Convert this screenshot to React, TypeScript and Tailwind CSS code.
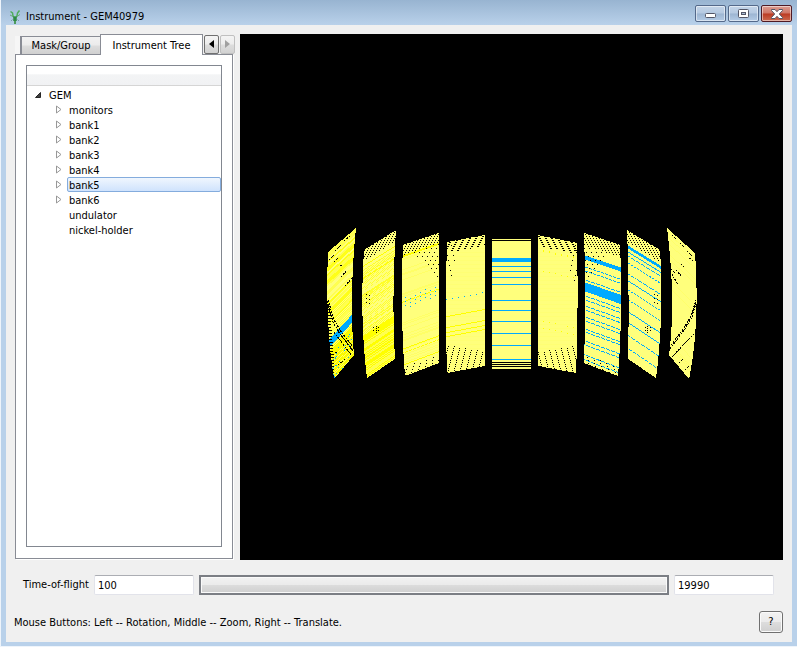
import React from "react";

type Point = [number, number];
type Stripe = { from: number; to: number; color: string; gap?: number };
type Bank = {
  top: [Point, Point];
  bottom: [Point, Point];
  bulge: [number, number];
  stripes: Stripe[];
  noise?: (v: number, x: number, y: number) => string | null;
  holes?: (v: number, rest: number, u: number, x: number, y: number) => boolean;
};

const PALE = "#ffff7c";
const BRIGHT = "#ffff00";
const BLUE = "#00aaff";
const BLACK = "#000000";

const hash = (n: number) => {
  const s = Math.sin(n * 127.1 + 11.7) * 43758.5453;
  return s - Math.floor(s);
};

const mod = (n: number, m: number) => ((n % m) + m) % m;

const line = (at: number, color = BLUE, gap = 0): Stripe => ({ from: at, to: at + 1, color, gap });

const banks: Bank[] = [
  {
    top: [[328, 252], [356, 228]],
    bottom: [[334, 379], [354, 355]],
    bulge: [-3, -3],
    stripes: [{ from: 84, to: 92, color: BLUE }],
    noise: (v, x, y) => {
      const h = hash(Math.floor(v / 2));
      if (v > 100 && hash(x * 3 + y * 57) > 0.95) return BLUE;
      if (v > 94) return mod(x + y, 2) === 0 || h > 0.5 ? "#fafa00" : "#ffff60";
      if (h > 0.75) return "#ffff18";
      if (h > 0.45) return "#ffff50";
      return v > 50 && mod(x + y, 2) === 0 ? "#ffff30" : null;
    },
    holes: (_v, _r, u, x, y) => u < 0.1 && y > 305 && mod(y, 3) === 0 && x < 334,
  },
  {
    top: [[364, 250], [396, 230]],
    bottom: [[367, 378], [395, 359]],
    bulge: [-3, -2],
    stripes: [line(15, BRIGHT), line(27, BRIGHT)],
    noise: (v, x, y) => {
      const h = hash(Math.floor(v) + 5);
      if (v < 14) return null;
      if (v > 84) return h > 0.45 ? "#ffff00" : "#ffff50";
      if (h > 0.8) return "#ffff28";
      return v > 20 && h > 0.3 && mod(x + y, 2) === 0 ? "#ffff30" : null;
    },
    holes: (v, _r, _u, x, y) =>
      (v < 11 && mod(y, 2) === 0 && mod(x + (y >> 1), 3) === 0) ||
      (x >= 364 && x < 370 && y > 293 && y < 304 && mod(x, 3) === 0 && mod(y + x, 4) === 0) ||
      (y > 324 && y < 333 && ((x === 376 && mod(y, 2) === 0) || (mod(y, 3) === 0 && (x === 373 || x === 378)))),
  },
  {
    top: [[403, 245], [439, 233]],
    bottom: [[405, 376], [439, 363]],
    bulge: [-2, 0],
    stripes: [
      { from: 10, to: 12, color: BRIGHT },
      line(56, BRIGHT, 5),
      line(103, BRIGHT),
      line(107, BRIGHT, 4),
      line(119, BRIGHT),
    ],
    noise: (v, x, y) => {
      if (v > 52 && v < 64 && mod(x, 5) === 0 && mod(y + x * 7, 4) === 0) return BLUE;
      return hash(Math.floor(v)) > 0.75 ? "#ffff66" : null;
    },
    holes: (v, rest, u, x, y) =>
      (v < 10 && mod(y, 2) === 0 && mod(x * 2 + y, 6) === 0) ||
      (v >= 10 && v < 50 * u - 3 && mod(y, 4) === 0 && mod(x + (y >> 1), 5) === 0) ||
      (rest < 9 && mod(y, 3) === 0 && mod(x + (y >> 2), 6) === 0),
  },
  {
    top: [[447, 242], [485, 235]],
    bottom: [[447, 373], [485, 366]],
    bulge: [-1, 0],
    stripes: [line(74, BRIGHT), line(85, BRIGHT), line(90, BRIGHT), line(94, BRIGHT)],
    noise: (v, x, y) => {
      if (v >= 57 && v < 58 && mod(x, 6) === 2) return BLUE;
      if (v >= 85 && v < 86 && mod(x, 6) === 4 && x < 475) return BLUE;
      return mod(y, 4) === 0 ? "#ffff74" : null;
    },
    holes: (v, rest, u, x, y) =>
      (v < 11 && mod(y, 2) === 0 && mod(x + (y >> 1), 6) < 2) ||
      (rest < 28 - 14 * u && mod(y, 2) === 0 && mod(x + (y >> 2), 6) === 0) ||
      (v < 36 && u < 0.2 && mod(y, 5) === 0 && mod(x + y, 6) === 0),
  },
  {
    top: [[492, 239], [531, 239]],
    bottom: [[492, 369], [531, 369]],
    bulge: [0, 0],
    stripes: [
      line(1, BLACK),
      { from: 19, to: 23, color: BLUE },
      ...[27, 32, 38, 45, 61, 71, 82, 94, 106, 120].map((at) => line(at)),
      ...[123, 125, 127].map((at) => line(at, BLACK)),
    ],
  },
  {
    top: [[538, 235], [577, 243]],
    bottom: [[538, 366], [576, 373]],
    bulge: [0, 1],
    stripes: [],
    noise: (v, x, y) => {
      if (mod(x, 6) === 3 && ((v > 14 && v < 16) || (v > 35 && v < 36) || (v > 85 && v < 86) || (v > 92 && v < 93)))
        return BRIGHT;
      return mod(y, 4) === 0 ? "#ffff74" : null;
    },
    holes: (v, rest, u, x, y) =>
      (v < 11 && mod(y, 2) === 0 && mod(x - (y >> 1), 6) < 2) ||
      (rest < 14 + 14 * u && mod(y, 2) === 0 && mod(x - (y >> 2), 6) === 0) ||
      (v < 40 && u > 0.8 && mod(y, 5) === 0 && mod(x - y, 6) === 0),
  },
  {
    top: [[584, 233], [620, 245]],
    bottom: [[584, 363], [618, 376]],
    bulge: [1, 2],
    stripes: [
      { from: 22, to: 26, color: BLUE },
      line(33, BLUE, 4),
      line(37, BLUE, 4),
      line(46, BLUE, 5),
      { from: 49, to: 58, color: BLUE },
      ...[62, 66, 72, 76, 83, 87, 95, 98, 107, 111, 121, 126].map((at) => line(at, BLUE, 5)),
    ],
    holes: (v, rest, u, x, y) =>
      (v < 12 && mod(y, 2) === 0 && mod(x * 2 - y, 6) === 0) ||
      (v >= 12 && v < 50 * (1 - u) - 3 && mod(y, 4) === 0 && mod(x - (y >> 1), 5) === 0) ||
      (rest < 9 && mod(y, 3) === 0 && mod(x - (y >> 2), 6) === 0),
  },
  {
    top: [[627, 230], [660, 250]],
    bottom: [[628, 359], [656, 378]],
    bulge: [1, 3],
    stripes: [
      { from: 15, to: 18, color: BLUE },
      line(21),
      line(25, BLUE, 5),
      line(32, BLUE, 3),
      line(43, BLUE, 6),
      line(50),
      line(59, BLUE, 3),
      line(69, BLUE, 3),
      line(81),
      line(92),
      line(105, BLUE, 5),
      line(118, BLUE, 4),
    ],
    holes: (v, _r, _u, x, y) =>
      (v < 12 && mod(y, 2) === 0 && mod(x - (y >> 1), 3) === 0) ||
      (x > 653 && x < 660 && y > 293 && y < 304 && mod(x, 3) === 0 && mod(y + x, 4) === 0) ||
      (y > 324 && y < 333 && ((x === 647 && mod(y, 2) === 0) || (mod(y, 3) === 0 && (x === 645 || x === 650)))),
  },
  {
    top: [[667, 228], [695, 253]],
    bottom: [[669, 355], [689, 379]],
    bulge: [4, 4],
    stripes: [],
    noise: (v) => (hash(Math.floor(v)) > 0.9 ? "#ffff6c" : null),
  },
];

/* Dead tubes that run across the two outermost banks. */
const deadTubes: string[] = [
  "M329 260l5 -5M335 251l6 -6M344 241l6 -5M334 262l4 -4M340 266l3 -2M341 277l6 -7M345 286l7 -8M330 249l3 -3",
  "M327 301l6 21l7 12l13 16M328 300l6 20l8 13l11 14M334 332l18 24M338 331l15 20M333 355l5 -4M338 365l5 -4M342 362l3 -3",
  "M672 235l4 4M680 243l4 4M687 251l5 5M681 264l3 3M676 270l6 7M672 274l6 11M671 269l4 4M689 258l5 3",
  "M670 349l15 -20l7 -12l4 -14M671 345l13 -17l7 -12l5 -16M672 357l13 -14l10 -10M679 363l4 -4M685 370l4 -4M673 356l3 -3",
];

const rasterize = (bank: Bank) => {
  const [[tx0, ty0], [tx1, ty1]] = bank.top;
  const [[bx0, by0], [bx1, by1]] = bank.bottom;
  const height = by0 - ty0;
  const runs = new Map<string, string>();
  const minX = Math.min(tx0, bx0) - 5;
  const maxX = Math.max(tx1, bx1) + 5;

  for (let x = minX; x < maxX; x++) {
    const topY = ty0 + ((ty1 - ty0) * (x + 0.5 - tx0)) / (tx1 - tx0);
    const bottomY = by0 + ((by1 - by0) * (x + 0.5 - bx0)) / (bx1 - bx0);
    let start = 0;
    let current: string | null = null;

    for (let y = 224; y <= 384; y++) {
      const t = (y + 0.5 - topY) / (bottomY - topY);
      const arc = 4 * t * (1 - t);
      const left = tx0 + (bx0 - tx0) * t + bank.bulge[0] * arc;
      const right = tx1 + (bx1 - tx1) * t + bank.bulge[1] * arc;
      let color: string | null = null;

      if (t >= 0 && t < 1 && x + 0.5 >= left && x + 0.5 < right) {
        const v = t * height;
        const u = (x - left) / (right - left);
        color = bank.noise?.(v, x, y) ?? PALE;
        for (const stripe of bank.stripes) {
          const skipped = stripe.gap ? mod(x, stripe.gap) === 0 : false;
          if (v >= stripe.from && v < stripe.to && !skipped) color = stripe.color;
        }
        if (bank.holes?.(v, height - v, u, x, y)) color = BLACK;
      }

      if (color !== current) {
        if (current) {
          runs.set(current, (runs.get(current) ?? "") + `M${x} ${start}h1V${y}h-1z`);
        }
        start = y;
        current = color;
      }
    }
  }
  return [...runs.entries()];
};

const rasters = banks.map(rasterize);

function InstrumentView() {
  return (
    <div className="min-w-0 flex-1 bg-black">
      <svg
        viewBox="240 34 543 526"
        className="block h-full w-full"
        shapeRendering="crispEdges"
        role="img"
        aria-label="GEM detector banks"
      >
        {rasters.map((runs, i) => (
          <g key={i}>
            {runs.map(([color, d]) => (
              <path key={color} d={d} fill={color} />
            ))}
          </g>
        ))}
        {deadTubes.map((d) => (
          <path key={d} d={d} fill="none" stroke="#000" strokeWidth="1" strokeDasharray="2 1" />
        ))}
      </svg>
    </div>
  );
}

function AppIcon() {
  return (
    <svg viewBox="0 0 12 16" className="h-4 w-3" fill="none" aria-hidden="true">
      <path d="M1.500 2.500l2 1.500 .5 3 2 2 2-2 .5-3 2-2.500" stroke="#4fae5c" strokeWidth="1.500" />
      <path d="M1 6l3 1.500M11 5.500L8 7.500" stroke="#6aa87c" />
      <path d="M6 7.500v4.500" stroke="#2f8a45" strokeWidth="3.500" />
      <path d="M6 12v3" stroke="#4d9a5c" strokeWidth="2" />
      <path d="M3.500 10.500L2 12M8.500 10.500L10 12" stroke="#7d9ab0" />
    </svg>
  );
}

function TitleBar() {
  const base =
    "flex h-[17px] w-[31px] items-center justify-center rounded-[2px] border shadow-[inset_0_0_0_1px_rgba(255,255,255,0.5)]";
  const plain = "border-[#54698a] bg-[linear-gradient(#c3d4e8_0%,#b5c9e1_48%,#9cb5d2_52%,#b4cbe5_100%)]";
  return (
    <header className="flex h-[25px] items-start justify-between bg-[linear-gradient(#98b4d1,#b9d1ea)] pr-[5px] pl-2">
      <div className="flex items-center gap-[5px] pt-[9px]">
        <AppIcon />
        <h1 className="text-[11px] leading-4">Instrument - GEM40979</h1>
      </div>
      <div className="flex gap-[2px] pt-[5px]">
        <button type="button" aria-label="Minimize" className={`${base} ${plain}`}>
          <svg viewBox="0 0 11 5" className="mt-[3px] h-[5px] w-[11px]" aria-hidden="true">
            <rect x=".5" y=".5" width="10" height="4" rx="1" fill="#fff" stroke="#535666" />
          </svg>
        </button>
        <button type="button" aria-label="Maximize" className={`${base} ${plain}`}>
          <svg viewBox="0 0 11 9" className="h-[9px] w-[11px]" aria-hidden="true">
            <rect x=".5" y=".5" width="10" height="8" rx="1" fill="#fff" stroke="#535666" />
            <rect x="3.5" y="3.5" width="4" height="2" fill="#a9bdd4" stroke="#535666" />
          </svg>
        </button>
        <button
          type="button"
          aria-label="Close"
          className={`${base} border-[#4e1a24] bg-[linear-gradient(#dc9d92_0%,#cf7565_48%,#bb3a22_52%,#cc6a50_100%)]`}
        >
          <svg viewBox="0 0 12 10" className="h-[10px] w-3" aria-hidden="true">
            <path
              d="M.5.5h3.500L6 2.700 8 .5h3.500v1L8.300 5l3.200 3.500v1H8L6 7.300 4 9.500H.5v-1L3.700 5 .5 1.500z"
              fill="#fff"
              stroke="#535666"
            />
          </svg>
        </button>
      </div>
    </header>
  );
}

function TabBar() {
  const scroll =
    "flex h-[19px] w-[15px] items-center justify-center rounded-[2px] border bg-[linear-gradient(#f4f4f4_0%,#ececec_48%,#dddddd_52%,#d2d2d2_100%)]";
  return (
    <div className="flex h-5 items-end" role="tablist">
      <span className="h-[18px] w-[6px] shrink-0 border-r border-[#898c95] bg-[#f6f6f6]" />
      <button
        type="button"
        role="tab"
        aria-selected="false"
        className="h-[18px] w-20 shrink-0 border border-b-0 border-[#898c95] bg-[linear-gradient(#f2f2f2_0%,#ebebeb_48%,#dddddd_52%,#d0d0d0_100%)] pt-px text-[11px] leading-4"
      >
        Mask/Group
      </button>
      <button
        type="button"
        role="tab"
        aria-selected="true"
        className="relative -mb-px -ml-px h-[21px] w-[103px] shrink-0 border border-b-0 border-[#898c95] bg-white pt-px text-[11px] leading-4"
      >
        Instrument Tree
      </button>
      <div className="flex h-full shrink-0 items-center gap-px pl-px">
        <button type="button" aria-label="Scroll left" className={`${scroll} border-[#707070]`}>
          <svg viewBox="0 0 5 8" className="h-2 w-[5px]" aria-hidden="true">
            <path d="M5 0v8L0 4z" fill="#000" />
          </svg>
        </button>
        <button type="button" aria-label="Scroll right" disabled className={`${scroll} border-[#c0c0c0]`}>
          <svg viewBox="0 0 5 8" className="h-2 w-[5px]" aria-hidden="true">
            <path d="M0 0v8l5-4z" fill="#a0a0a0" />
          </svg>
        </button>
      </div>
    </div>
  );
}

const nodes = [
  { name: "monitors", children: true },
  { name: "bank1", children: true },
  { name: "bank2", children: true },
  { name: "bank3", children: true },
  { name: "bank4", children: true },
  { name: "bank5", children: true, selected: true },
  { name: "bank6", children: true },
  { name: "undulator", children: false },
  { name: "nickel-holder", children: false },
];

function InstrumentTree() {
  return (
    <div className="flex-1 border border-[#828790] bg-white">
      <div className="h-5 border-b border-[#d5d5d5] bg-[linear-gradient(#ffffff_0%,#ffffff_42%,#f3f4f5_46%,#f1f2f4_100%)]" />
      <ul role="tree" className="pt-px text-[11px] leading-[17px]">
        <li role="treeitem" aria-expanded="true" aria-selected="false">
          <div className="flex h-[15px] gap-2 pl-2">
            <svg viewBox="0 0 6 6" className="h-[6px] w-[6px] self-center" aria-hidden="true">
              <path d="M5.500.500v5h-5z" fill="#404040" stroke="#262626" />
            </svg>
            GEM
          </div>
          <ul role="group">
            {nodes.map((node) => (
              <li
                key={node.name}
                role="treeitem"
                aria-selected={node.selected ? "true" : "false"}
                className="flex h-[15px] pl-[29px]"
              >
                <span className="flex w-[11px] shrink-0 items-center">
                  {node.children && (
                    <svg viewBox="0 0 6 9" className="h-[9px] w-[6px]" aria-hidden="true">
                      <path d="M.5 1v7L5 4.500z" fill="#fff" stroke="#989898" />
                    </svg>
                  )}
                </span>
                <span
                  className={
                    node.selected
                      ? "h-[15px] flex-1 rounded-[2px] border border-[#84acdd] bg-[linear-gradient(#f0f6fe,#cfe3fd)] pl-px leading-[15px]"
                      : "flex-1 pl-[2px]"
                  }
                >
                  {node.name}
                </span>
              </li>
            ))}
          </ul>
        </li>
      </ul>
    </div>
  );
}

const field =
  "h-5 w-[100px] rounded-[2px] border border-[#e2e3ea] border-t-[#abadb3] bg-white px-[3px] pt-px text-[11px] leading-4 outline-none";

export default function App() {
  return (
    <div className="flex min-h-screen flex-col border-b border-l border-[#eef4fb] bg-[#b9d1ea] font-['DejaVu_Sans_Condensed','DejaVu_Sans',sans-serif] text-black">
      <TitleBar />
      <main className="mr-[5px] mb-1 ml-[5px] flex flex-1 flex-col bg-[#f0f0f0] p-[9px]">
        <div className="flex min-h-[526px] gap-[7px]">
          <section className="flex w-[218px] shrink-0 flex-col pb-px">
            <TabBar />
            <div className="flex flex-1 flex-col border border-[#898c95] bg-white p-[10px] pb-[11px] shadow-[1px_1px_0_#ffffff]">
              <InstrumentTree />
            </div>
          </section>
          <InstrumentView />
        </div>
        <div className="mt-[15px] flex items-center gap-[5px] pr-[9px] pl-2">
          <label htmlFor="tof-min" className="text-[11px] leading-4">
            Time-of-flight
          </label>
          <input id="tof-min" className={field} defaultValue="100" />
          <button
            type="button"
            aria-label="Time-of-flight range"
            className="h-5 flex-1 border-2 border-[#7b7e84] bg-[linear-gradient(#f2f2f2_0%,#ebebeb_48%,#dcdcdc_52%,#cfcfcf_100%)] shadow-[inset_0_0_0_1px_#fafafa]"
          />
          <input aria-label="Time-of-flight maximum" className={field} defaultValue="19990" />
        </div>
        <div className="mt-4 flex items-center justify-between">
          <p className="-ml-px pt-px text-[11px] leading-4">
            Mouse Buttons: Left -- Rotation, Middle -- Zoom, Right -- Translate.
          </p>
          <button
            type="button"
            className="h-[22px] w-6 rounded-[3px] border border-[#707070] bg-[linear-gradient(#f2f2f2_0%,#ebebeb_48%,#dddddd_52%,#cfcfcf_100%)] text-[11px] leading-4 shadow-[inset_0_0_0_1px_#fafafa]"
          >
            ?
          </button>
        </div>
      </main>
    </div>
  );
}
